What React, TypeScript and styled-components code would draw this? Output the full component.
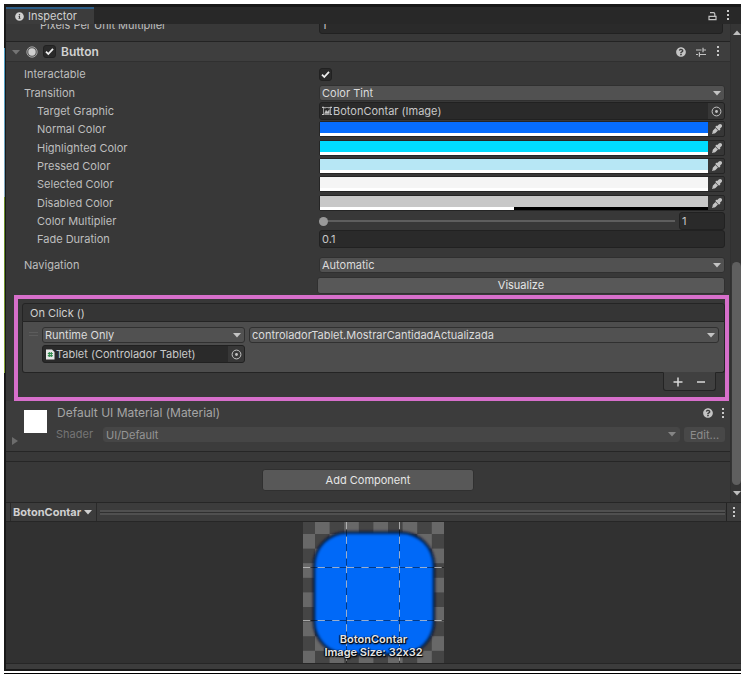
import React, { useState } from "react";
import styled, { createGlobalStyle, css } from "styled-components";
import { FaEyeDropper, FaInfoCircle, FaQuestionCircle } from "react-icons/fa";

const GlobalStyle = createGlobalStyle`
  *, *::before, *::after { box-sizing: border-box; }
  body { margin: 0; background: #fff; }
  body, button, input, select {
    font-family: Inter, "Liberation Sans", sans-serif;
    font-size: 11px;
    font-feature-settings: "calt" 0;
    line-height: 16px;
    color: #bebebe;
  }
  button, input, select { margin: 0; padding: 0; border: 0; background: none; border-radius: 0; }
`;

const Page = styled.div`
  padding: 4px 0 4px 4px;
`;

const Shell = styled.div`
  display: flex;
  border-bottom: 2px solid #191919;
`;

const SceneEdge = styled.div`
  width: 2px;
  border-right: 1px solid #191919;
  background: linear-gradient(
    #191919 0 44px, #4f9fc4 44px 74px, #86aabf 190px, #8fa9b8 193px,
    #6b8f2a 193px 260px, #8aa83a 369px, #191919 369px
  );
`;

const Panel = styled.div`
  flex: 1;
  min-width: 0;
  background: #383838;
`;

const Baseline = styled.div`
  margin-top: 2px;
  height: 1px;
  background: #000;
`;

const TabBar = styled.div`
  display: flex;
  justify-content: space-between;
  height: 20px;
  padding: 0 11px 0 0;
  background: #282828;
  border-top: 3px solid #191919;
`;

const Tab = styled.button`
  display: flex;
  align-items: center;
  gap: 4px;
  width: 88px;
  height: 17px;
  padding: 0 0 0 9px;
  border-top: 2px solid #2c5d87;
  background: #3c3c3c;
  color: #d0d0d0;
  line-height: 15px;
`;

const IconGroup = styled.div<{ $gap: number }>`
  display: flex;
  align-items: center;
  gap: ${(p) => p.$gap}px;
`;

const IconButton = styled.button`
  display: grid;
  place-items: center;
  color: #c4c4c4;
  svg { display: block; }
`;

const HeaderFoldout = styled(IconButton)`
  color: #747474;
`;

const ScrollArea = styled.div`
  display: flex;
  overflow: hidden;
`;

const Content = styled.div`
  flex: 1;
  min-width: 0;
`;

const Scrollbar = styled.div`
  display: flex;
  flex-direction: column;
  align-items: center;
  width: 11px;
  padding: 5px 0 5px 1px;
  background: #353535;
  border-left: 1px solid #303030;
`;

const ScrollGap = styled.div`
  flex: 226;
`;

const Thumb = styled.div`
  flex: 224;
  width: 100%;
  margin-bottom: 4px;
  border-radius: 5px;
  background: #5f5f5f;
`;

const ComponentBlock = styled.section`
  border-top: 1px solid #232323;
`;

const ComponentHeader = styled.header`
  display: flex;
  align-items: center;
  justify-content: space-between;
  height: 20px;
  padding: 0 10px 0 6px;
  background: #3e3e3e;
  border-bottom: 1px solid #303030;
`;

const HeaderTitle = styled.div`
  display: flex;
  align-items: center;
  gap: 6px;
  font-size: 12px;
  font-weight: 600;
  color: #d2d2d2;
`;

const Fields = styled.div`
  display: grid;
  grid-auto-rows: 18px 19px 18px;
  padding: 3px 5px 0 18px;
`;

const Row = styled.div<{ $indent?: boolean }>`
  display: grid;
  grid-template-columns: 295px minmax(0, 1fr);
  align-items: center;
  > label { padding-left: ${(p) => (p.$indent ? 13 : 0)}px; }
`;

const ClippedRow = styled(Row)`
  height: 17px;
  margin: -8px 7px 8px 18px;
  > label { padding-left: 16px; }
`;

const NavigationFields = styled.div`
  display: grid;
  grid-auto-rows: 20px;
  align-items: center;
  padding: 7px 5px 0 18px;
`;

const Label = styled.label`
  white-space: nowrap;
`;

const inset = css`
  background: #2a2a2a;
  border: 1px solid #212121;
  border-radius: 3px;
`;

const TextInput = styled.input`
  ${inset}
  width: 100%;
  height: 18px;
  padding: 0 2px;
  color: #c8c8c8;
`;

const Stack = styled.span`
  display: inline-grid;
  place-items: center;
  justify-self: start;
  > * { grid-area: 1 / 1; }
  > svg { pointer-events: none; }
`;

const Tick = styled.input`
  appearance: none;
  ${inset}
  width: 13px;
  height: 13px;
  & + svg { visibility: hidden; }
  &:checked + svg { visibility: visible; }
`;

const SelectFrame = styled.span<{ $dim?: boolean }>`
  display: grid;
  align-items: center;
  min-width: 0;
  color: ${(p) => (p.$dim ? "#858585" : "#c4c4c4")};
  > * { grid-area: 1 / 1; }
  > svg { justify-self: end; margin-right: 4px; pointer-events: none; }
`;

const Select = styled.select<{ $dim?: boolean }>`
  appearance: none;
  width: 100%;
  height: ${(p) => (p.$dim ? 15 : 16)}px;
  padding: 0 18px 0 2px;
  border: 1px solid ${(p) => (p.$dim ? "#464646" : "#303030")};
  border-radius: 3px;
  background: ${(p) => (p.$dim ? "#464646" : "#515151")};
  color: ${(p) => (p.$dim ? "#959595" : "#dcdcdc")};
  line-height: 14px;
  opacity: 1;
`;

const ObjectFrame = styled.div`
  ${inset}
  display: flex;
  align-items: center;
  height: 18px;
  padding-left: 2px;
  gap: 1px;
  min-width: 0;
`;

const ObjectName = styled.button`
  flex: 1;
  text-align: left;
  color: #c8c8c8;
  white-space: nowrap;
`;

const Picker = styled(IconButton)`
  width: 16px;
  height: 16px;
  border-radius: 0 2px 2px 0;
  background: #373737;
`;

const Eyedropper = styled(IconButton)`
  width: 16px;
  height: 14px;
  padding-left: 2px;
`;

const ColorFrame = styled.div`
  display: flex;
  height: 16px;
  border: 1px solid #252525;
  border-radius: 2px;
  background: #373737;
`;

const ColorValue = styled.div`
  flex: 1;
  display: flex;
  flex-direction: column;
`;

const Swatch = styled.input`
  appearance: none;
  display: block;
  width: 100%;
  height: 11px;
  &::-webkit-color-swatch-wrapper { padding: 0; }
  &::-webkit-color-swatch { border: 0; }
`;

const Alpha = styled.div<{ $alpha: number }>`
  height: 3px;
  background: linear-gradient(90deg, #fff ${(p) => p.$alpha}%, #000 ${(p) => p.$alpha}%);
`;

const SliderRow = styled.div`
  display: grid;
  grid-template-columns: minmax(0, 1fr) 46px;
  gap: 4px;
  align-items: center;
`;

const Slider = styled.input`
  appearance: none;
  width: 100%;
  height: 10px;
  background: linear-gradient(#5e5e5e, #5e5e5e) center / 100% 2px no-repeat;
  &::-webkit-slider-thumb {
    appearance: none;
    width: 9px;
    height: 9px;
    border-radius: 50%;
    background: #999;
  }
`;

const PushButton = styled.button`
  height: 17px;
  border: 1px solid #303030;
  border-radius: 3px;
  background: #585858;
  color: #e6e6e6;
  line-height: 15px;
`;

const VisualizeButton = styled(PushButton)`
  margin-left: 293px;
`;

const EventHighlight = styled.div`
  margin: 0 1px 0 8px;
  padding: 4px 0 6px 4px;
  border: 4px solid #d76fcb;
`;

const EventHeader = styled.div`
  height: 19px;
  padding: 0 7px;
  border: 1px solid #242424;
  border-radius: 3px 3px 0 0;
  background: #353535;
  line-height: 18px;
  color: #d0d0d0;
`;

const EventList = styled.div`
  display: grid;
  grid-template-columns: 9px 203px minmax(0, 1fr);
  column-gap: 4px;
  align-items: start;
  height: 51px;
  padding: 5px 5px 0 6px;
  border: 1px solid #242424;
  border-top: 0;
  border-radius: 0 0 3px 3px;
  background: #4d4d4d;
`;

const Grip = styled.span`
  height: 4px;
  margin-top: 5px;
  border-top: 1px solid #5c5c5c;
  border-bottom: 1px solid #5c5c5c;
`;

const EventTarget = styled.div`
  display: grid;
  gap: 2px;
`;

const ListFooter = styled.div`
  display: flex;
  justify-content: space-around;
  width: 53px;
  height: 19px;
  margin: -1px 9px 0 auto;
  padding: 0 3px;
  border: 1px solid #242424;
  border-top-color: #404040;
  border-radius: 0 0 3px 3px;
  background: #404040;
`;

const Material = styled.section`
  display: grid;
  grid-template-columns: 13px 26px minmax(0, 1fr);
  height: 51px;
  padding: 4px 5px 0 5px;
  background: #3c3c3c;
  border-bottom: 1px solid #262626;
`;

const Foldout = styled(IconButton)`
  align-self: end;
  justify-self: start;
  margin-bottom: 6px;
  color: #6c6c6c;
`;

const Thumbnail = styled.div`
  width: 23px;
  height: 23px;
  margin-top: 5px;
  background: #fff;
`;

const MaterialBody = styled.div`
  padding-left: 7px;
`;

const MaterialTitle = styled.div`
  display: flex;
  align-items: center;
  justify-content: space-between;
  height: 16px;
  margin-bottom: 5px;
  font-size: 12px;
  color: #a5a5a5;
`;

const ShaderRow = styled.div`
  display: grid;
  grid-template-columns: 42px minmax(0, 1fr) 41px;
  gap: 4px;
  align-items: center;
  color: #757575;
  > label { margin-left: -1px; }
`;

const EditButton = styled.button`
  height: 15px;
  border-radius: 3px;
  background: #484848;
  color: #8c8c8c;
`;

const AddArea = styled.div`
  display: flex;
  justify-content: center;
  height: 41px;
  margin-top: 9px;
  padding-top: 7px;
  border-top: 1px solid #262626;
`;

const AddButton = styled(PushButton)`
  width: 212px;
  height: 22px;
`;

const PreviewBar = styled.div`
  display: flex;
  align-items: center;
  height: 20px;
  padding: 0 1px 0 4px;
  border-top: 1px solid #262626;
  border-bottom: 1px solid #262626;
  background: #3c3c3c;
`;

const PreviewName = styled.button`
  display: flex;
  align-items: center;
  gap: 3px;
  height: 18px;
  padding: 0 4px 0 2px;
  border-left: 1px solid #2a2a2a;
  border-right: 1px solid #2a2a2a;
  font-weight: 700;
  color: #d0d0d0;
`;

const DragHandle = styled.div`
  flex: 1;
  height: 5px;
  margin: 0 1px 0 3px;
  border: solid #505050;
  border-width: 2px 0;
  background: #303030;
`;

const PreviewMenu = styled(IconButton)`
  width: 14px;
  height: 18px;
  border-left: 1px solid #242424;
`;

const Preview = styled.figure`
  display: flex;
  justify-content: center;
  margin: 0;
  background: #313131;
`;

const PreviewImage = styled.div`
  display: grid;
  width: 141px;
  > * { grid-area: 1 / 1; }
  svg { display: block; }
`;

const Caption = styled.figcaption`
  align-self: end;
  justify-self: center;
  padding-bottom: 4px;
  font-weight: 600;
  line-height: 13px;
  text-align: center;
  white-space: nowrap;
  color: #e6e6e6;
  text-shadow: 1px 1px 1px #000, 0 1px 2px #000, -1px 0 1px #000;
`;

const BottomStrip = styled.div`
  height: 6px;
  border-top: 1px solid #262626;
  background: #3c3c3c;
`;

const Arrow = ({ dir = "down", size = 8 }: { dir?: "down" | "up" | "right"; size?: number }) => (
  <svg width={size} height={size} viewBox="0 0 8 8" fill="currentColor" aria-hidden="true">
    <path d={dir === "down" ? "M0 2h8L4 6.5z" : dir === "up" ? "M0 6h8L4 1.5z" : "M1 0v8l6-4z"} />
  </svg>
);

const Check = () => (
  <svg width="13" height="13" viewBox="0 0 13 13" fill="none" stroke="#eee" strokeWidth="1.8" aria-hidden="true">
    <path d="M3 6.6 5.3 9 10 3.8" />
  </svg>
);

const Dots = () => (
  <svg width="4" height="11" viewBox="0 0 4 11" fill="#c8c8c8" aria-hidden="true">
    <path d="M1 0h2v2H1zM1 4h2v2H1zM1 8h2v2H1z" />
  </svg>
);

const Target = () => (
  <svg width="11" height="11" viewBox="0 0 11 11" aria-hidden="true">
    <circle cx="5.5" cy="5.5" r="4.4" fill="none" stroke="#c4c4c4" />
    <circle cx="5.5" cy="5.5" r="1.4" fill="#c4c4c4" />
  </svg>
);

const Padlock = () => (
  <svg width="9" height="10" viewBox="0 0 9 10" fill="none" stroke="#c4c4c4" strokeWidth="1.2" aria-hidden="true">
    <path d="M1 5.4h7V8.6H1zM2 1.6h3.4q1.4 0 1.4 1.4v2.4" />
  </svg>
);

const Presets = () => (
  <svg width="10" height="10" viewBox="0 0 10 10" stroke="#c4c4c4" strokeWidth="1.2" aria-hidden="true">
    <path d="M0 3h5.5M6.6 3H10M7 .8v4.4M0 7.5h2M3.4 7.5H10M3.4 5.3v4.4" />
  </svg>
);

const ButtonGlyph = () => (
  <svg width="12" height="12" viewBox="0 0 12 12" aria-hidden="true">
    <circle cx="6" cy="6" r="5.2" fill="#555" stroke="#a0a0a0" />
    <circle cx="6" cy="6" r="3.7" fill="#cfcfcf" />
  </svg>
);

const ImageGlyph = () => (
  <svg width="10" height="10" viewBox="0 0 10 10" fill="none" stroke="#c4c4c4" aria-hidden="true">
    <path d="M1.5 2v6M8.5 2v6M3 1.5h4M3 8.5h4" strokeWidth=".7" />
    <path d="M0 1.5h2.5M7.5 1.5H10M0 8.5h2.5M7.5 8.5H10M1 .5l2 2M9 .5l-2 2" />
    <path d="M2.5 7.5 4 4.2l1.5 1.8L7.4 3.6v3.9z" fill="#c4c4c4" strokeWidth=".4" />
  </svg>
);

const ScriptGlyph = () => (
  <svg width="10" height="11" viewBox="0 0 10 11" aria-hidden="true">
    <path d="M1 .5h6L9.5 3v7.5H1z" fill="#e8e8e8" />
    <path d="M4.3 3v5M6.3 3v5M2.8 4.5h5M2.8 6.6h5" stroke="#2f8a4c" strokeWidth="1.1" />
  </svg>
);

const Plus = () => (
  <svg width="10" height="10" viewBox="0 0 10 10" stroke="#d8d8d8" strokeWidth="1.5" aria-hidden="true">
    <path d="M5 .5v9M.5 5h9" />
  </svg>
);

const Minus = () => (
  <svg width="10" height="10" viewBox="0 0 10 10" stroke="#d8d8d8" strokeWidth="1.5" aria-hidden="true">
    <path d="M1 5h8" />
  </svg>
);

const SpriteDrawing = () => (
  <svg width="141" height="141" viewBox="0 0 141 141" aria-hidden="true">
    <defs>
      <pattern id="checker" width="29.2" height="29.2" x="-2.6" y="-2.6" patternUnits="userSpaceOnUse">
        <rect width="29.2" height="29.2" fill="#454545" />
        <rect x="14.6" width="14.6" height="14.6" fill="#686868" />
        <rect y="14.6" width="14.6" height="14.6" fill="#686868" />
      </pattern>
      <filter id="soft" x="-10%" y="-10%" width="120%" height="120%">
        <feGaussianBlur stdDeviation="1.5" />
      </filter>
    </defs>
    <rect width="141" height="141" fill="url(#checker)" />
    <rect x="10" y="9.5" width="122" height="124" rx="34" fill="#001028" filter="url(#soft)" />
    <rect x="12" y="11.5" width="118" height="120" rx="32" fill="#0669f8" filter="url(#soft)" />
    <g fill="none">
      <path d="M43.5 0v141M96.5 0v141M0 45.5h141M0 98.5h141" stroke="#000" strokeOpacity=".45" />
      <path d="M43.5 0v141M96.5 0v141M0 45.5h141M0 98.5h141" stroke="#fff" strokeOpacity=".6" strokeDasharray="7.3 7.3" />
    </g>
  </svg>
);

function Dropdown({ id, value, label, dim }: { id: string; value: string; label?: string; dim?: boolean }) {
  return (
    <SelectFrame $dim={dim}>
      <Select id={id} aria-label={label} $dim={dim} disabled={dim} defaultValue={value}>
        <option>{value}</option>
      </Select>
      <Arrow />
    </SelectFrame>
  );
}

function ObjectField({ id, icon, text }: { id: string; icon: React.ReactNode; text: string }) {
  return (
    <ObjectFrame>
      {icon}
      <ObjectName id={id}>{text}</ObjectName>
      <Picker aria-label="Select object"><Target /></Picker>
    </ObjectFrame>
  );
}

function ColorField({ id, label, color, alpha = 100 }: { id: string; label: string; color: string; alpha?: number }) {
  const [value, setValue] = useState(color);
  return (
    <Row $indent>
      <Label htmlFor={id}>{label}</Label>
      <ColorFrame>
        <ColorValue>
          <Swatch id={id} type="color" value={value} onChange={(e) => setValue(e.target.value)} />
          <Alpha $alpha={alpha} />
        </ColorValue>
        <Eyedropper aria-label={`Pick ${label}`}><FaEyeDropper size={10} /></Eyedropper>
      </ColorFrame>
    </Row>
  );
}

const colors = [
  { id: "normal", label: "Normal Color", color: "#066dff" },
  { id: "highlighted", label: "Highlighted Color", color: "#00dcff" },
  { id: "pressed", label: "Pressed Color", color: "#b7e7f5" },
  { id: "selected", label: "Selected Color", color: "#f5f5f5" },
  { id: "disabled", label: "Disabled Color", color: "#c8c8c8", alpha: 50 },
];

export default function App() {
  const [multiplier, setMultiplier] = useState("1");
  return (
    <Page>
      <GlobalStyle />
      <Shell>
        <SceneEdge />
        <Panel>
          <TabBar>
            <Tab><FaInfoCircle size={9} />Inspector</Tab>
            <IconGroup $gap={9}>
              <IconButton aria-label="Lock"><Padlock /></IconButton>
              <IconButton aria-label="Inspector menu"><Dots /></IconButton>
            </IconGroup>
          </TabBar>
          <ScrollArea>
            <Content>
              <ClippedRow $indent>
                <Label htmlFor="ppu">Pixels Per Unit Multiplier</Label>
                <TextInput id="ppu" defaultValue="1" />
              </ClippedRow>
              <ComponentBlock>
                <ComponentHeader>
                  <HeaderTitle>
                    <HeaderFoldout aria-label="Collapse"><Arrow /></HeaderFoldout>
                    <IconGroup $gap={5}>
                      <ButtonGlyph />
                      <Stack>
                        <Tick type="checkbox" id="enabled" defaultChecked />
                        <Check />
                      </Stack>
                      <Label htmlFor="enabled">Button</Label>
                    </IconGroup>
                  </HeaderTitle>
                  <IconGroup $gap={10}>
                    <IconButton aria-label="Help"><FaQuestionCircle size={10} /></IconButton>
                    <IconButton aria-label="Presets"><Presets /></IconButton>
                    <IconButton aria-label="Component menu"><Dots /></IconButton>
                  </IconGroup>
                </ComponentHeader>
                <Fields>
                  <Row>
                    <Label htmlFor="interactable">Interactable</Label>
                    <Stack>
                      <Tick type="checkbox" id="interactable" defaultChecked />
                      <Check />
                    </Stack>
                  </Row>
                  <Row>
                    <Label htmlFor="transition">Transition</Label>
                    <Dropdown id="transition" value="Color Tint" />
                  </Row>
                  <Row $indent>
                    <Label htmlFor="target">Target Graphic</Label>
                    <ObjectField id="target" icon={<ImageGlyph />} text="BotonContar (Image)" />
                  </Row>
                  {colors.map((c) => <ColorField key={c.id} {...c} />)}
                  <Row $indent>
                    <Label htmlFor="multiplier">Color Multiplier</Label>
                    <SliderRow>
                      <Slider
                        id="multiplier" type="range" min="1" max="5" step="0.1"
                        value={multiplier} onChange={(e) => setMultiplier(e.target.value)}
                      />
                      <TextInput
                        aria-label="Color Multiplier value"
                        value={multiplier} onChange={(e) => setMultiplier(e.target.value)}
                      />
                    </SliderRow>
                  </Row>
                  <Row $indent>
                    <Label htmlFor="fade">Fade Duration</Label>
                    <TextInput id="fade" defaultValue="0.1" />
                  </Row>
                </Fields>
                <NavigationFields>
                  <Row>
                    <Label htmlFor="navigation">Navigation</Label>
                    <Dropdown id="navigation" value="Automatic" />
                  </Row>
                  <VisualizeButton>Visualize</VisualizeButton>
                </NavigationFields>
                <EventHighlight>
                  <EventHeader>On Click ()</EventHeader>
                  <EventList>
                    <Grip />
                    <EventTarget>
                      <Dropdown id="mode" label="Call state" value="Runtime Only" />
                      <ObjectField id="listener" icon={<ScriptGlyph />} text="Tablet (Controlador Tablet)" />
                    </EventTarget>
                    <Dropdown id="method" label="Function" value="controladorTablet.MostrarCantidadActualizada" />
                  </EventList>
                  <ListFooter>
                    <IconButton aria-label="Add listener"><Plus /></IconButton>
                    <IconButton aria-label="Remove listener"><Minus /></IconButton>
                  </ListFooter>
                </EventHighlight>
              </ComponentBlock>
              <Material>
                <Foldout aria-label="Expand material"><Arrow dir="right" /></Foldout>
                <Thumbnail />
                <MaterialBody>
                  <MaterialTitle>
                    Default UI Material (Material)
                    <IconGroup $gap={8}>
                      <IconButton aria-label="Help"><FaQuestionCircle size={10} /></IconButton>
                      <IconButton aria-label="Material menu"><Dots /></IconButton>
                    </IconGroup>
                  </MaterialTitle>
                  <ShaderRow>
                    <Label htmlFor="shader">Shader</Label>
                    <Dropdown id="shader" value="UI/Default" dim />
                    <EditButton>Edit...</EditButton>
                  </ShaderRow>
                </MaterialBody>
              </Material>
              <AddArea><AddButton>Add Component</AddButton></AddArea>
            </Content>
            <Scrollbar>
              <Arrow dir="up" />
              <ScrollGap />
              <Thumb />
              <Arrow />
            </Scrollbar>
          </ScrollArea>
          <PreviewBar>
            <PreviewName>BotonContar<Arrow /></PreviewName>
            <DragHandle />
            <PreviewMenu aria-label="Preview menu"><Dots /></PreviewMenu>
          </PreviewBar>
          <Preview>
            <PreviewImage>
              <SpriteDrawing />
              <Caption>BotonContar<br />Image Size: 32x32</Caption>
            </PreviewImage>
          </Preview>
          <BottomStrip />
        </Panel>
      </Shell>
      <Baseline />
    </Page>
  );
}
